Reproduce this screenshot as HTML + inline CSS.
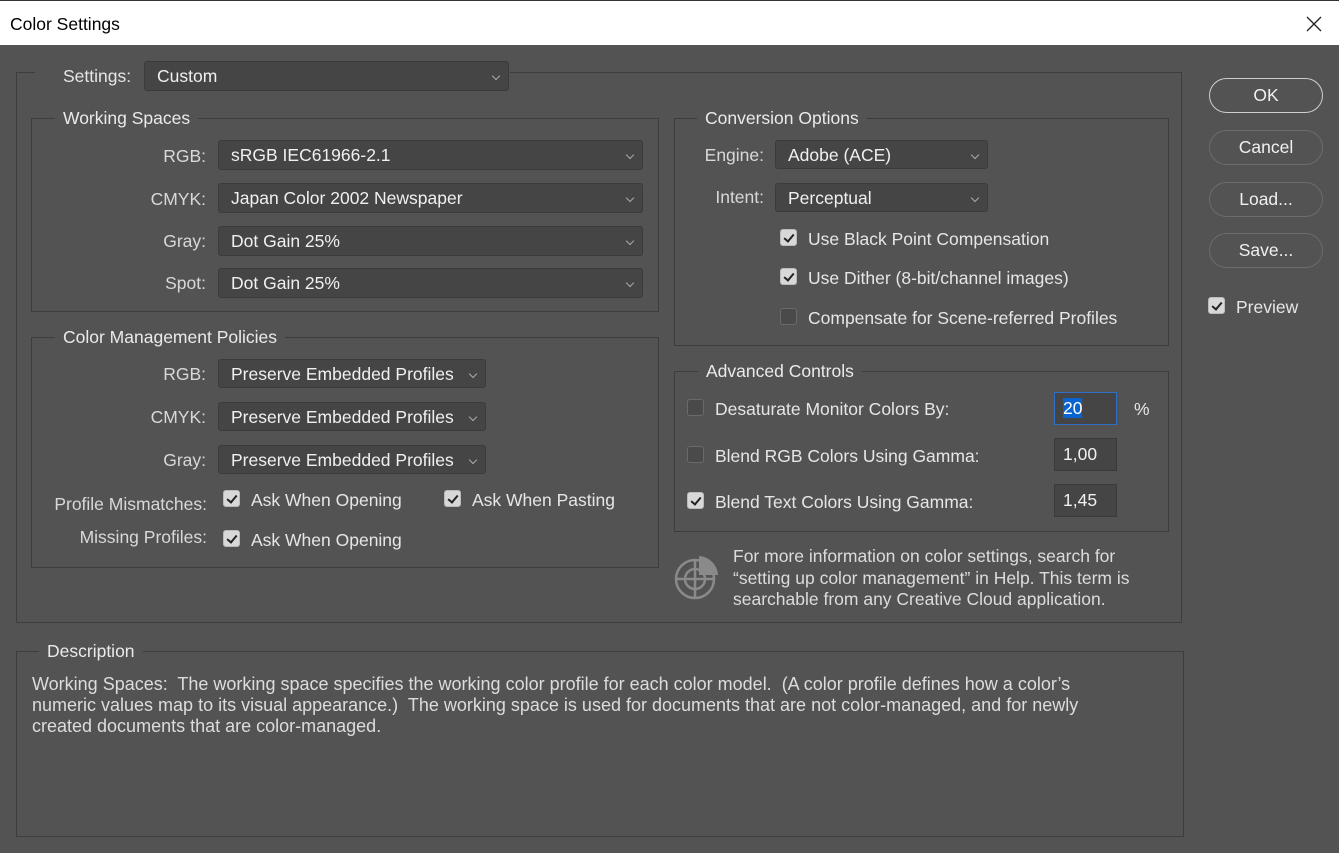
<!DOCTYPE html>
<html><head><meta charset="utf-8"><style>
*{margin:0;padding:0;box-sizing:border-box}
body{width:1339px;height:853px;background:#535353;font-family:"Liberation Sans",sans-serif;font-size:17.5px;color:#e6e6e6;position:relative;overflow:hidden}
.a{position:absolute;white-space:nowrap;line-height:20px}
.tb{position:absolute;left:0;top:0;width:1339px;height:45px;background:#fff;color:#000;border-top:1px solid #333}
.box{position:absolute;border:1px solid #3d3d3d}
.leg{position:absolute;background:#535353;padding:0 8px;line-height:20px;color:#eaeaea}
.dd{position:absolute;background:#454545;border:1px solid #3b3b3b;border-radius:3px;line-height:29px;padding-left:12px;color:#f0f0f0}
.dd:after{content:"";position:absolute;right:9px;top:11px;width:5px;height:5px;border-right:1px solid #aaa;border-bottom:1px solid #aaa;transform:rotate(45deg)}
.lbl{position:absolute;text-align:right;line-height:20px;color:#d8d8d8}
.cb{position:absolute;width:17px;height:17px;border-radius:3px;background:#d8d8d8;border:1px solid #bbb}
.cb.on:after{content:"";position:absolute;left:5px;top:2px;width:4px;height:8px;border-right:2px solid #222;border-bottom:2px solid #222;transform:rotate(40deg)}
.cb.off{background:#4a4a4a;border:1px solid #6a6a6a}
.inp{position:absolute;width:63px;height:33px;background:#454545;border:1px solid #3a3a3a;line-height:31px;padding-left:8px;color:#f0f0f0}
.btn{position:absolute;left:1209px;width:114px;height:35px;border:1px solid #6c6c6c;border-radius:18px;text-align:center;line-height:33px;color:#f0f0f0}
</style></head><body>
<div class="tb"><span class="a" style="left:10px;top:13px;font-size:17.5px">Color Settings</span>
<svg style="position:absolute;left:1306px;top:15px" width="16" height="16"><path d="M1 1L15 15M15 1L1 15" stroke="#222" stroke-width="1.3"/></svg></div>

<div class="box" style="left:16px;top:72px;width:1166px;height:551px"></div>
<div class="leg" style="left:35px;top:60px;width:475px;height:32px"></div>
<span class="a" style="left:63px;top:66px">Settings:</span>
<div class="dd" style="left:144px;top:61px;width:365px;height:30px">Custom</div>

<div class="box" style="left:31px;top:118px;width:628px;height:194px"></div>
<div class="leg" style="left:55px;top:108px">Working Spaces</div>
<div class="lbl" style="left:100px;width:106px;top:146px">RGB:</div>
<div class="dd" style="left:218px;top:140px;width:425px;height:30px">sRGB IEC61966-2.1</div>
<div class="lbl" style="left:100px;width:106px;top:189px">CMYK:</div>
<div class="dd" style="left:218px;top:183px;width:425px;height:30px">Japan Color 2002 Newspaper</div>
<div class="lbl" style="left:100px;width:106px;top:231px">Gray:</div>
<div class="dd" style="left:218px;top:226px;width:425px;height:30px">Dot Gain 25%</div>
<div class="lbl" style="left:100px;width:106px;top:273px">Spot:</div>
<div class="dd" style="left:218px;top:268px;width:425px;height:30px">Dot Gain 25%</div>

<div class="box" style="left:31px;top:337px;width:628px;height:231px"></div>
<div class="leg" style="left:55px;top:327px">Color Management Policies</div>
<div class="lbl" style="left:100px;width:106px;top:364px">RGB:</div>
<div class="dd" style="left:218px;top:359px;width:268px;height:29px">Preserve Embedded Profiles</div>
<div class="lbl" style="left:100px;width:106px;top:407px">CMYK:</div>
<div class="dd" style="left:218px;top:402px;width:268px;height:29px">Preserve Embedded Profiles</div>
<div class="lbl" style="left:100px;width:106px;top:450px">Gray:</div>
<div class="dd" style="left:218px;top:445px;width:268px;height:29px">Preserve Embedded Profiles</div>
<div class="lbl" style="left:20px;width:187px;top:494px">Profile Mismatches:</div>
<div class="cb on" style="left:223px;top:490px"></div><span class="a" style="left:251px;top:490px">Ask When Opening</span>
<div class="cb on" style="left:444px;top:490px"></div><span class="a" style="left:472px;top:490px">Ask When Pasting</span>
<div class="lbl" style="left:20px;width:187px;top:527px">Missing Profiles:</div>
<div class="cb on" style="left:223px;top:530px"></div><span class="a" style="left:251px;top:530px">Ask When Opening</span>

<div class="box" style="left:674px;top:118px;width:495px;height:228px"></div>
<div class="leg" style="left:697px;top:108px">Conversion Options</div>
<div class="lbl" style="left:680px;width:84px;top:145px">Engine:</div>
<div class="dd" style="left:775px;top:140px;width:213px;height:29px">Adobe (ACE)</div>
<div class="lbl" style="left:680px;width:84px;top:187px">Intent:</div>
<div class="dd" style="left:775px;top:183px;width:213px;height:29px">Perceptual</div>
<div class="cb on" style="left:780px;top:229px"></div><span class="a" style="left:808px;top:229px">Use Black Point Compensation</span>
<div class="cb on" style="left:780px;top:268px"></div><span class="a" style="left:808px;top:268px">Use Dither (8-bit/channel images)</span>
<div class="cb off" style="left:780px;top:308px"></div><span class="a" style="left:808px;top:308px">Compensate for Scene-referred Profiles</span>

<div class="box" style="left:674px;top:371px;width:495px;height:161px"></div>
<div class="leg" style="left:698px;top:361px">Advanced Controls</div>
<div class="cb off" style="left:687px;top:399px"></div><span class="a" style="left:715px;top:399px">Desaturate Monitor Colors By:</span>
<div class="inp" style="left:1054px;top:392px;border-color:#2f6fc8"><span style="background:#0a64d0;color:#fff">20</span></div>
<span class="a" style="left:1134px;top:399px">%</span>
<div class="cb off" style="left:687px;top:446px"></div><span class="a" style="left:715px;top:446px">Blend RGB Colors Using Gamma:</span>
<div class="inp" style="left:1054px;top:438px">1,00</div>
<div class="cb on" style="left:687px;top:492px"></div><span class="a" style="left:715px;top:492px">Blend Text Colors Using Gamma:</span>
<div class="inp" style="left:1054px;top:484px">1,45</div>

<svg style="position:absolute;left:672px;top:554px" width="48" height="48" viewBox="0 0 48 48"><g fill="none" stroke="#8a8a8a" stroke-width="2.5"><circle cx="23" cy="25" r="19"/><circle cx="23" cy="25" r="10"/><path d="M23 5V45M4 25H42"/></g><path d="M27 2A20 20 0 0 1 46 21H27Z" fill="#8a8a8a"/></svg>
<div class="a" style="left:733px;top:546px;line-height:21.5px;color:#dcdcdc">For more information on color settings, search for<br>“setting up color management” in Help. This term is<br>searchable from any Creative Cloud application.</div>

<div class="btn" style="top:78px;border-color:#cfcfcf">OK</div>
<div class="btn" style="top:130px">Cancel</div>
<div class="btn" style="top:182px">Load...</div>
<div class="btn" style="top:233px">Save...</div>
<div class="cb on" style="left:1208px;top:297px"></div><span class="a" style="left:1236px;top:297px">Preview</span>

<div class="box" style="left:16px;top:651px;width:1168px;height:186px"></div>
<div class="leg" style="left:39px;top:641px">Description</div>
<div class="a" style="left:32px;top:674px;line-height:21px;color:#dcdcdc;font-size:18px">Working Spaces:&nbsp; The working space specifies the working color profile for each color model.&nbsp; (A color profile defines how a color’s<br>numeric values map to its visual appearance.)&nbsp; The working space is used for documents that are not color-managed, and for newly<br>created documents that are color-managed.</div>
</body></html>
